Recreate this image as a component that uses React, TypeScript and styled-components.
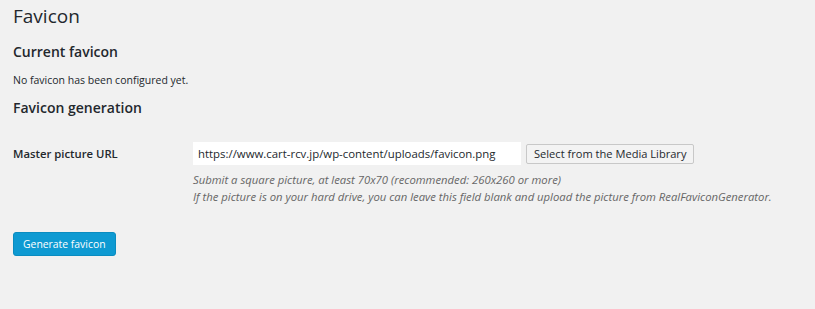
import React from "react";
import styled, { createGlobalStyle } from "styled-components";

const Global = createGlobalStyle`
  html, body { margin: 0; padding: 0; background: #f1f1f1; }
  body { font-family: "Open Sans", "Noto Sans", sans-serif; color: #23282d; }
`;

const Page = styled.div`
  display: flex;
  flex-direction: column;
  padding: 0 13px;
  width: 815px;
  height: 309px;
  box-sizing: border-box;
`;

const Title = styled.h1`
  margin: 4px 0 0;
  font-size: 19px;
  font-weight: 400;
  line-height: 24px;
  color: #23282d;
`;

const Heading = styled.h2<{ $top: number }>`
  margin: ${(p) => p.$top}px 0 0;
  font-size: 14px;
  font-weight: 600;
  line-height: 18px;
  color: #23282d;
`;

const Note = styled.p`
  margin: 12px 0 0;
  font-size: 10.5px;
  line-height: 14px;
`;

const FormRow = styled.div`
  display: grid;
  grid-template-columns: 180px 1fr;
  margin-top: 25px;
`;

const Label = styled.label`
  font-size: 11.3px;
  font-weight: 600;
  line-height: 14px;
  padding-top: 5px;
`;

const Field = styled.div`
  display: flex;
  flex-direction: column;
`;

const InputLine = styled.div`
  display: flex;
  align-items: center;
  gap: 5px;
`;

const UrlInput = styled.input`
  width: 328px;
  height: 23px;
  box-sizing: border-box;
  border: none;
  background: #fff;
  padding: 0 5px;
  font-family: inherit;
  font-size: 11.4px;
  color: #23282d;
  outline: none;
`;

const MediaButton = styled.button`
  height: 20px;
  box-sizing: border-box;
  border: 1px solid #c8c8c8;
  background: #f3f3f3;
  border-radius: 2px;
  padding: 0 7px;
  font-family: inherit;
  font-size: 11.1px;
  color: #23282d;
`;

const Description = styled.p`
  margin: 6px 0 0;
  font-size: 11.3px;
  font-style: italic;
  line-height: 17px;
  color: #666;
`;

const PrimaryButton = styled.button`
  align-self: flex-start;
  margin-top: 27px;
  height: 24px;
  box-sizing: border-box;
  padding: 0 9px;
  border: 1px solid #0a8cc0;
  border-radius: 3px;
  background: #0e9ad2;
  color: #fff;
  font-family: inherit;
  font-size: 10.4px;
`;

export default function App() {
  return (
    <>
      <Global />
      <Page>
        <Title>Favicon</Title>
        <Heading $top={15}>Current favicon</Heading>
        <Note>No favicon has been configured yet.</Note>
        <Heading $top={12}>Favicon generation</Heading>
        <FormRow>
          <Label>Master picture URL</Label>
          <Field>
            <InputLine>
              <UrlInput defaultValue="https://www.cart-rcv.jp/wp-content/uploads/favicon.png" />
              <MediaButton>Select from the Media Library</MediaButton>
            </InputLine>
            <Description>
              Submit a square picture, at least 70x70 (recommended: 260x260 or more)
              <br />
              If the picture is on your hard drive, you can leave this field blank and upload the picture from RealFaviconGenerator.
            </Description>
          </Field>
        </FormRow>
        <PrimaryButton>Generate favicon</PrimaryButton>
      </Page>
    </>
  );
}
